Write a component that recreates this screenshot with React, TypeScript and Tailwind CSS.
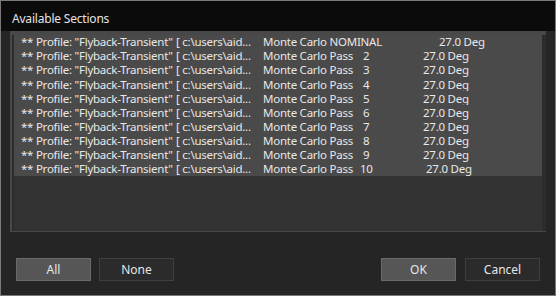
import React from "react";

type Row = {
  label: string;
  num: string;
  labelCls: string;
  numCls: string;
};

const rows: Row[] = [
  { label: "Monte Carlo NOMINAL", num: "", labelCls: "w-[176px]", numCls: "w-0" },
  { label: "Monte Carlo Pass", num: "2", labelCls: "w-[100px]", numCls: "w-[60px]" },
  { label: "Monte Carlo Pass", num: "3", labelCls: "w-[100px]", numCls: "w-[60px]" },
  { label: "Monte Carlo Pass", num: "4", labelCls: "w-[100px]", numCls: "w-[60px]" },
  { label: "Monte Carlo Pass", num: "5", labelCls: "w-[100px]", numCls: "w-[60px]" },
  { label: "Monte Carlo Pass", num: "6", labelCls: "w-[100px]", numCls: "w-[60px]" },
  { label: "Monte Carlo Pass", num: "7", labelCls: "w-[100px]", numCls: "w-[60px]" },
  { label: "Monte Carlo Pass", num: "8", labelCls: "w-[100px]", numCls: "w-[60px]" },
  { label: "Monte Carlo Pass", num: "9", labelCls: "w-[100px]", numCls: "w-[60px]" },
  { label: "Monte Carlo Pass", num: "10", labelCls: "w-[97px]", numCls: "w-[66px]" },
];

const Button = ({ label, active }: { label: string; active?: boolean }) => (
  <button
    className={`w-[75px] h-[23px] border text-[12px] text-[#e6e6e6] flex items-center justify-center ${
      active ? "bg-[#565656] border-[#6a6a6a]" : "bg-[#2b2b2b] border-[#3f3f3f]"
    }`}
  >
    {label}
  </button>
);

export default function App() {
  return (
    <div
      className="w-[556px] h-[296px] border border-[#7a7a7a] bg-[#252525] flex flex-col text-[#e8e8e8] select-none"
      style={{ fontFamily: '"Noto Sans", "Open Sans", sans-serif' }}
    >
      {/* Title bar */}
      <div className="h-[30px] bg-[#0b0b0b] flex items-center pt-[5px] pl-[11px] text-[12px] tracking-[-0.2px] text-[#e4e4e4] shrink-0">
        Available Sections
      </div>

      {/* List */}
      <div className="mx-[9px] h-[201px] bg-[#484848] pt-[4px] pl-[2px] pb-[1px] flex">
        <div className="flex-1 bg-[#333333] border-l-2 border-r-4 border-[#2c2c2c] flex flex-col">
          {rows.map((r, i) => (
            <div
              key={i}
              className="h-[14.1px] bg-[#4a4a4a] flex items-center pl-[7px] text-[11.5px] tracking-[-0.25px] leading-none whitespace-nowrap"
            >
              <span className="w-[155px] shrink-0">** Profile: "Flyback-Transient"</span>
              <span className="w-[87px] shrink-0">[ c:\users\aid...</span>
              <span className={`${r.labelCls} shrink-0`}>{r.label}</span>
              <span className={`${r.numCls} shrink-0`}>{r.num}</span>
              <span className="shrink-0">27.0 Deg</span>
            </div>
          ))}
        </div>
      </div>

      {/* Buttons */}
      <div className="flex-1 flex items-start justify-between pt-[26px] px-[15px]">
        <div className="flex gap-[8px]">
          <Button label="All" active />
          <Button label="None" />
        </div>
        <div className="flex gap-[9px]">
          <Button label="OK" active />
          <Button label="Cancel" />
        </div>
      </div>
    </div>
  );
}
